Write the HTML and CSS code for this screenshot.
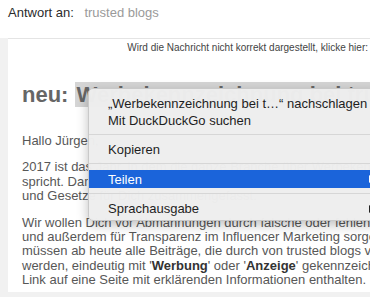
FILE: index.html
```html
<!DOCTYPE html>
<html lang="de">
<head>
    <meta charset="UTF-8">
    <meta name="viewport" content="width=device-width, initial-scale=1.0">
    <title>Antwort an: trusted blogs</title>
    <link rel="stylesheet" href="styles.css">
</head>
<body>
    <!-- Mail header -->
    <div class="reply-to">
        <span class="label">Antwort an:</span>
        <span class="sender">trusted blogs</span>
    </div>

    <!-- Mail body -->
    <div class="mail">
        <div class="frame">
            <p class="notice">Wird die Nachricht nicht korrekt dargestellt, klicke hier:</p>

            <h1 class="title">neu: <span class="selected">Werbekennzeichnung bei trusted blogs</span></h1>

            <p class="text">Hallo Jürgen,</p>
            <p class="text">2017 ist das Jahr, in dem die ganze Branche über Werbekennzeichnung<br>
                spricht. Damit Du auf der sicheren Seite bist, haben wir Richtlinien<br>
                und Gesetze für Dich zusammengefasst.</p>
            <p class="text">Wir wollen Dich vor Abmahnungen durch falsche oder fehlende Kennzeichnung schützen<br>
                und außerdem für Transparenz im Influencer Marketing sorgen. Deshalb<br>
                müssen ab heute alle Beiträge, die durch von trusted blogs vermittelt<br>
                werden, eindeutig mit '<b>Werbung</b>' oder '<b>Anzeige</b>' gekennzeichnet sein und einen<br>
                Link auf eine Seite mit erklärenden Informationen enthalten.</p>
        </div>
    </div>

    <!-- Context menu over the selection -->
    <ul class="menu">
        <li class="item">„Werbekennzeichnung bei t…“ nachschlagen</li>
        <li class="item">Mit DuckDuckGo suchen</li>
        <li class="sep"></li>
        <li class="item">Kopieren</li>
        <li class="sep"></li>
        <li class="item active">Teilen <span class="arrow"></span></li>
        <li class="sep"></li>
        <li class="item">Sprachausgabe <span class="arrow"></span></li>
    </ul>
</body>
</html>
```

FILE: styles.css
```css
html, body {
    overflow: hidden;
}
body {
    margin: 0;
    padding: 0;
    background: #fff;
    font-family: "Liberation Sans", Arial, sans-serif;
    width: 370px;
    height: 297px;
}
.reply-to {
    padding: 5px 8px 17px;
    font-size: 13px;
    line-height: 16px;
    white-space: nowrap;
}
.label {
    color: #2b2b2b;
}
.sender {
    color: #9a9a9a;
    margin-left: 7px;
}
.mail {
    background: #f1f1f1;
    padding-left: 6px;
    height: 259px;
}
.frame {
    background: #fff;
    border-top: 1px solid #e4e4e4;
    margin-left: 2px;
    padding: 3px 0 5px 14px;
    height: 245px;
    overflow: hidden;
}
.notice {
    margin: 0;
    font-size: 10px;
    line-height: 12px;
    color: #444;
    text-align: right;
    white-space: nowrap;
    padding-right: 2px;
}
.title {
    margin: 28px 0 0;
    font-size: 22px;
    line-height: 26px;
    font-weight: bold;
    color: #666;
    white-space: nowrap;
}
.selected {
    background: #d5d5d5;
    padding-left: 2px;
}
.text {
    margin: 0;
    font-size: 13px;
    line-height: 14.4px;
    color: #575757;
    white-space: nowrap;
}
.title + .text {
    margin-top: 26px;
}
.text + .text {
    margin-top: 12px;
}
.text b {
    color: #333;
}
.menu {
    position: absolute;
    left: 88px;
    top: 88px;
    width: 292px;
    margin: 0;
    padding: 6px 0 3px;
    list-style: none;
    background: rgba(238, 238, 238, 0.98);
    border: 1px solid #c9c9c9;
    border-radius: 5px;
    box-shadow: 0 4px 12px rgba(0, 0, 0, 0.25);
    font-size: 13px;
    color: #1e1e1e;
}
.item {
    display: flex;
    align-items: center;
    height: 17px;
    padding: 0 7px 0 19px;
    white-space: nowrap;
}
.item.active {
    background: #1b64da;
    color: #fff;
    height: 18px;
}
.sep {
    height: 1px;
    background: #d6d6d6;
    margin: 5px 0 6px;
}
.arrow {
    margin-left: auto;
    width: 0;
    height: 0;
    border-top: 4px solid transparent;
    border-bottom: 4px solid transparent;
    border-left: 5px solid #222;
}
.active .arrow {
    border-left-color: #fff;
}
```
